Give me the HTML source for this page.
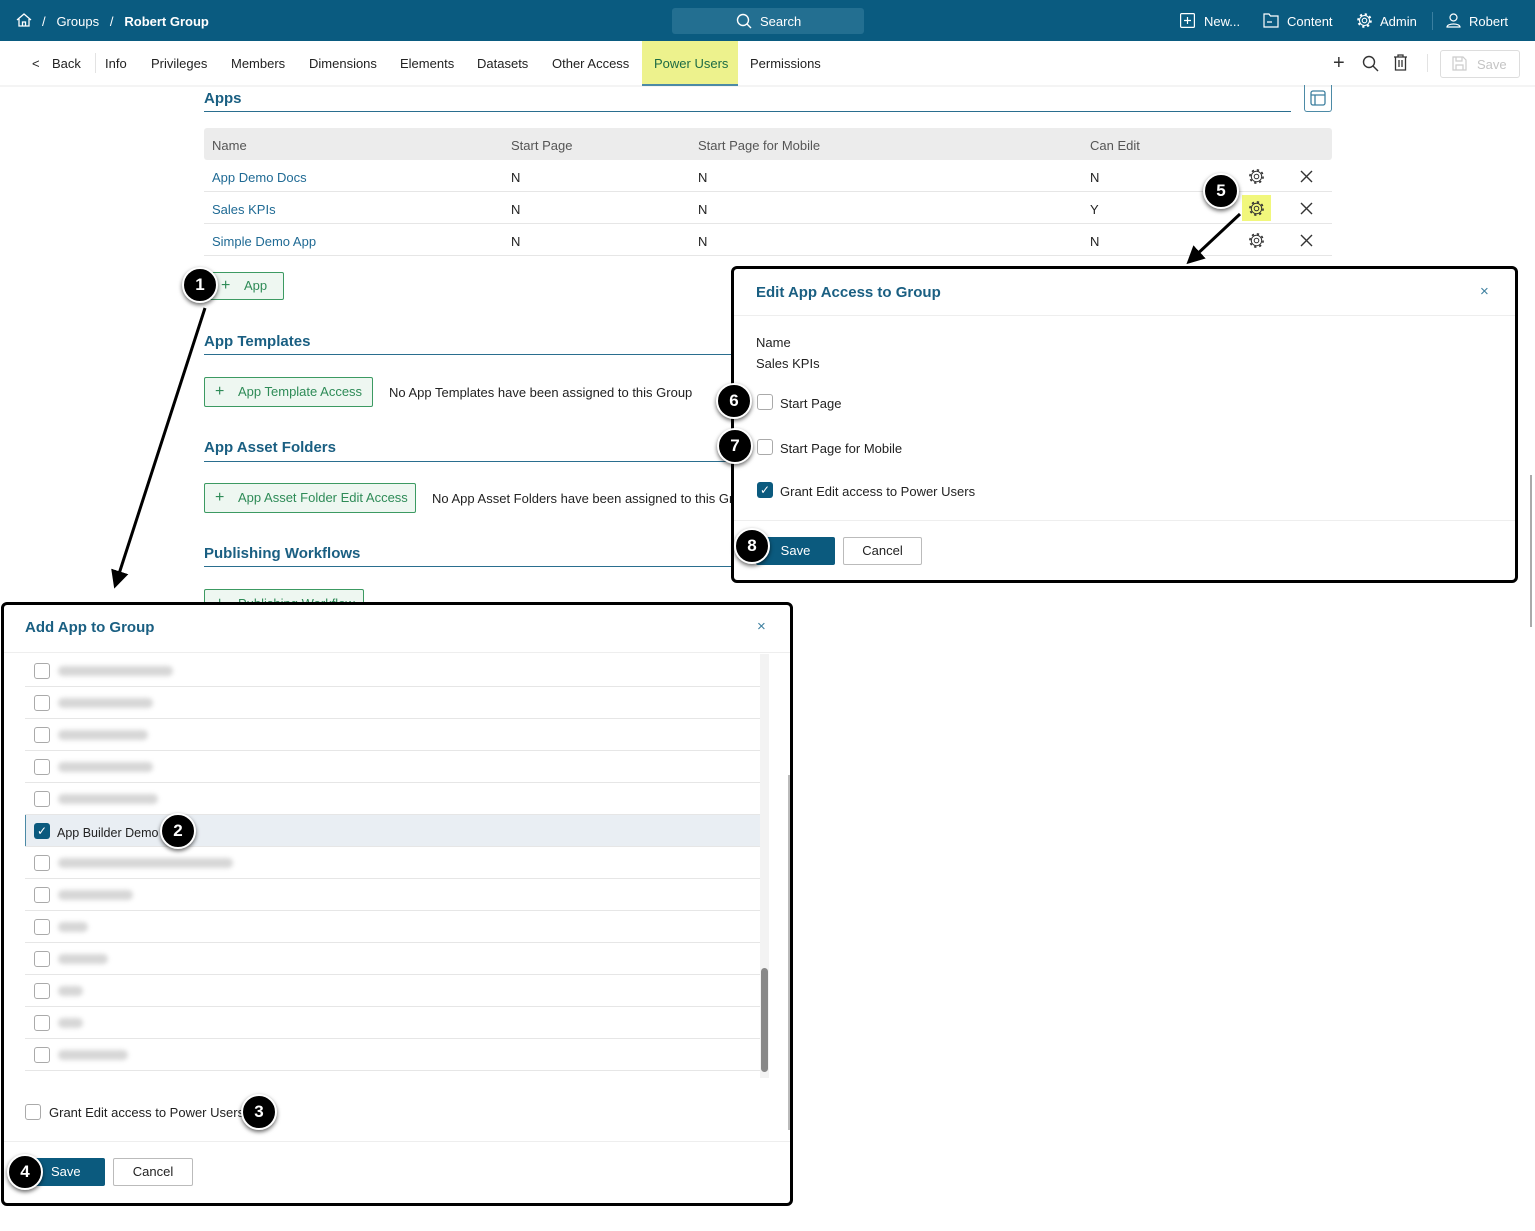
<!DOCTYPE html>
<html><head><meta charset="utf-8"><style>
*{box-sizing:border-box;margin:0;padding:0}
body{width:1535px;height:1231px;position:relative;background:#fff;font-family:"Liberation Sans",sans-serif;font-size:13px;color:#222;overflow:hidden}
.a{position:absolute;white-space:nowrap}
.top{left:0;top:0;width:1535px;height:41px;background:#0a5b80;color:#fff}
.tab{top:56px;font-size:13px;color:#222}
.h{font-size:15px;font-weight:bold;color:#1a5f82}
.ln{height:1px;background:#2a6e8f}
.sep{height:1px;background:#e6e6e6}
.lnk{color:#1f6a94}
.gbtn{border:1px solid #3c9a62;background:#eef7f1;color:#2e8b57;border-radius:2px;height:30px;line-height:28px;padding-left:10px;font-size:13px}
.gbtn span{display:inline-block;width:23px;font-size:16px}
.modal{border:3px solid #000;border-radius:6px;background:#fff}
.mt{font-size:15px;font-weight:bold;color:#1a5f82}
.cb{width:16px;height:16px;border:1px solid #aaa;border-radius:3px;background:#fff}
.cbk{width:16px;height:16px;border-radius:3px;background:#0b5a7e;color:#fff;font-size:12px;line-height:16px;text-align:center}
.save{background:#0b5a7e;color:#fff;border-radius:2px;text-align:center;line-height:28px;height:28px}
.cancel{border:1px solid #bbb;color:#222;border-radius:2px;text-align:center;line-height:26px;height:28px;background:#fff}
.mk{width:36px;height:36px;border-radius:50%;background:#000;border:2px solid #fff;box-shadow:0 2px 4px rgba(0,0,0,.6);color:#fff;font-size:17px;font-weight:bold;text-align:center;line-height:32px}
.blur{background:#d6d6d6;filter:blur(2.5px);height:10px;border-radius:5px}
</style></head><body>
<div class="a top"></div>
<svg class="a" style="left:16px;top:12px" width="16" height="16" viewBox="0 0 16 16" fill="none" stroke="#fff" stroke-width="1.3"><path d="M1 8 8 2l7 6M3 7v7h10V7M6.5 14v-4h3v4"/></svg>
<div class="a" style="left:42px;top:14px;color:#fff">/&nbsp;&nbsp;&nbsp;Groups&nbsp;&nbsp;&nbsp;/&nbsp;&nbsp;&nbsp;<b>Robert Group</b></div>
<div class="a" style="left:672px;top:8px;width:192px;height:26px;background:#236f91;border-radius:3px"></div>
<svg class="a" style="left:736px;top:13px" width="16" height="16" fill="none" stroke="#fff" stroke-width="1.4"><circle cx="7" cy="7" r="5.5"/><path d="M11 11l4 4"/></svg>
<div class="a" style="left:760px;top:14px;color:#fff">Search</div>
<svg class="a" style="left:1180px;top:13px" width="15" height="15" fill="none" stroke="#fff" stroke-width="1.2"><rect x=".6" y=".6" width="13.8" height="13.8" rx="1"/><path d="M7.5 4v7M4 7.5h7"/></svg>
<div class="a" style="left:1204px;top:14px;color:#fff">New...</div>
<svg class="a" style="left:1263px;top:13px" width="16" height="15" fill="none" stroke="#fff" stroke-width="1.2"><path d="M1 1h5l1.5 2H15v11H1zM4 9h5"/></svg>
<div class="a" style="left:1287px;top:14px;color:#fff">Content</div>
<svg class="a" style="left:1356px;top:12px" width="17" height="17" fill="none" stroke="#fff"><circle cx="8.5" cy="8.5" r="2.3" stroke-width="1.1"/><circle cx="8.5" cy="8.5" r="6.3" stroke-dasharray="2.2 2.75" stroke-width="2"/><circle cx="8.5" cy="8.5" r="5" stroke-width="1"/></svg>
<div class="a" style="left:1380px;top:14px;color:#fff">Admin</div>
<div class="a" style="left:1432px;top:12px;width:1px;height:18px;background:#3a7fa0"></div>
<svg class="a" style="left:1446px;top:13px" width="15" height="15" fill="none" stroke="#fff" stroke-width="1.2"><circle cx="7.5" cy="4.5" r="3.5"/><path d="M1 14c0-4 13-4 13 0z"/></svg>
<div class="a" style="left:1469px;top:14px;color:#fff">Robert</div>

<div class="a" style="left:0;top:85px;width:1535px;height:2px;background:#f4f4f4"></div>
<div class="a tab" style="left:32px">&lt;</div>
<div class="a tab" style="left:52px">Back</div>
<div class="a" style="left:95px;top:53px;width:1px;height:20px;background:#e3e3e3"></div>
<div class="a tab" style="left:105px">Info</div>
<div class="a tab" style="left:151px">Privileges</div>
<div class="a tab" style="left:231px">Members</div>
<div class="a tab" style="left:309px">Dimensions</div>
<div class="a tab" style="left:400px">Elements</div>
<div class="a tab" style="left:477px">Datasets</div>
<div class="a tab" style="left:552px">Other Access</div>
<div class="a" style="left:642px;top:41px;width:96px;height:45px;background:#edf28d;border-bottom:2px solid #4c8aa6"></div>
<div class="a tab" style="left:654px;color:#1d6b44">Power Users</div>
<div class="a tab" style="left:750px">Permissions</div>
<div class="a" style="left:1333px;top:52px;font-size:20px;color:#333">+</div>
<svg class="a" style="left:1362px;top:55px" width="17" height="17" fill="none" stroke="#333" stroke-width="1.4"><circle cx="7" cy="7" r="5.5"/><path d="M11 11l5 5"/></svg>
<svg class="a" style="left:1393px;top:54px" width="15" height="17" fill="none" stroke="#333" stroke-width="1.3"><path d="M1 3h13M5 3V1h5v2M2.5 3v13h10V3M6 6v7M9 6v7"/></svg>
<div class="a" style="left:1427px;top:54px;width:1px;height:18px;background:#e3e3e3"></div>
<div class="a" style="left:1440px;top:50px;width:80px;height:28px;border:1px solid #ddd;border-radius:3px;color:#c4c4c4;padding:6px 0 0 36px">Save</div>
<svg class="a" style="left:1452px;top:56px" width="15" height="15" fill="none" stroke="#ccc" stroke-width="1.2"><path d="M1 1h10l3 3v10H1zM4 1v4h6V1M4 14V9h7v5"/></svg>

<div class="a h" style="left:204px;top:90px">Apps</div>
<div class="a ln" style="left:204px;top:111px;width:1087px"></div>
<div class="a" style="left:1304px;top:85px;width:28px;height:27px;border:1px solid #4c8aa6;border-radius:0 0 3px 3px;border-top:none"></div>
<svg class="a" style="left:1310px;top:90px" width="16" height="16" fill="none" stroke="#3d7f9f" stroke-width="1.3"><rect x="1" y="1" width="14" height="14" rx="2"/><path d="M1 5h14M5 5v10"/></svg>
<div class="a" style="left:204px;top:128px;width:1128px;height:32px;background:#ececec;border-radius:3px"></div>
<div class="a" style="left:212px;top:138px;color:#555">Name</div>
<div class="a" style="left:511px;top:138px;color:#555">Start Page</div>
<div class="a" style="left:698px;top:138px;color:#555">Start Page for Mobile</div>
<div class="a" style="left:1090px;top:138px;color:#555">Can Edit</div>
<div class="a lnk" style="left:212px;top:170px">App Demo Docs</div>
<div class="a lnk" style="left:212px;top:202px">Sales KPIs</div>
<div class="a lnk" style="left:212px;top:234px">Simple Demo App</div>
<div class="a" style="left:511px;top:170px">N</div><div class="a" style="left:698px;top:170px">N</div><div class="a" style="left:1090px;top:170px">N</div>
<div class="a" style="left:511px;top:202px">N</div><div class="a" style="left:698px;top:202px">N</div><div class="a" style="left:1090px;top:202px">Y</div>
<div class="a" style="left:511px;top:234px">N</div><div class="a" style="left:698px;top:234px">N</div><div class="a" style="left:1090px;top:234px">N</div>
<div class="a sep" style="left:204px;top:191px;width:1128px"></div>
<div class="a sep" style="left:204px;top:223px;width:1128px"></div>
<div class="a sep" style="left:204px;top:255px;width:1128px"></div>
<div class="a" style="left:1242px;top:195px;width:29px;height:26px;background:#f1f77c"></div>
<svg class="a" style="left:1248px;top:168px" width="17" height="81" fill="none" stroke="#333">
<g><circle cx="8.5" cy="8.5" r="2.3" stroke-width="1"/><circle cx="8.5" cy="8.5" r="6.6" stroke-dasharray="2.3 2.9" stroke-width="1.6"/><circle cx="8.5" cy="8.5" r="5.2" stroke-width="1"/></g>
<g transform="translate(0,32)"><circle cx="8.5" cy="8.5" r="2.3" stroke-width="1"/><circle cx="8.5" cy="8.5" r="6.6" stroke-dasharray="2.3 2.9" stroke-width="1.6"/><circle cx="8.5" cy="8.5" r="5.2" stroke-width="1"/></g>
<g transform="translate(0,64)"><circle cx="8.5" cy="8.5" r="2.3" stroke-width="1"/><circle cx="8.5" cy="8.5" r="6.6" stroke-dasharray="2.3 2.9" stroke-width="1.6"/><circle cx="8.5" cy="8.5" r="5.2" stroke-width="1"/></g>
</svg>
<svg class="a" style="left:1300px;top:170px" width="13" height="77" stroke="#333" stroke-width="1.4"><path d="M1 1l11 11M12 1 1 12M1 33l11 11M12 33 1 44M1 65l11 11M12 65 1 76"/></svg>

<div class="a gbtn" style="left:204px;top:272px;width:80px;height:28px;line-height:26px;padding-left:16px"><span>+</span>App</div>
<div class="a h" style="left:204px;top:333px">App Templates</div>
<div class="a ln" style="left:204px;top:354px;width:530px"></div>
<div class="a gbtn" style="left:204px;top:377px;width:169px"><span>+</span>App Template Access</div>
<div class="a" style="left:389px;top:385px">No App Templates have been assigned to this Group</div>
<div class="a h" style="left:204px;top:439px">App Asset Folders</div>
<div class="a ln" style="left:204px;top:461px;width:530px"></div>
<div class="a gbtn" style="left:204px;top:483px;width:212px"><span>+</span>App Asset Folder Edit Access</div>
<div class="a" style="left:432px;top:491px">No App Asset Folders have been assigned to this Gro</div>
<div class="a h" style="left:204px;top:545px">Publishing Workflows</div>
<div class="a ln" style="left:204px;top:566px;width:530px"></div>
<div class="a gbtn" style="left:204px;top:589px;width:160px;height:20px;overflow:hidden"><span>+</span>Publishing Workflow</div>
<div class="a" style="left:1530px;top:475px;width:2px;height:152px;background:#aaa"></div>

<!-- right modal -->
<div class="a modal" style="left:731px;top:266px;width:787px;height:317px"></div>
<div class="a mt" style="left:756px;top:284px">Edit App Access to Group</div>
<div class="a" style="left:1480px;top:283px;color:#3d7f9f;font-size:15px">×</div>
<div class="a sep" style="left:734px;top:315px;width:781px;background:#eee"></div>
<div class="a" style="left:756px;top:335px">Name</div>
<div class="a" style="left:756px;top:356px">Sales KPIs</div>
<div class="a cb" style="left:757px;top:394px"></div><div class="a" style="left:780px;top:396px">Start Page</div>
<div class="a cb" style="left:757px;top:439px"></div><div class="a" style="left:780px;top:441px">Start Page for Mobile</div>
<div class="a cbk" style="left:757px;top:482px">✓</div><div class="a" style="left:780px;top:484px">Grant Edit access to Power Users</div>
<div class="a sep" style="left:734px;top:520px;width:781px;background:#eee"></div>
<div class="a save" style="left:756px;top:537px;width:79px">Save</div>
<div class="a cancel" style="left:843px;top:537px;width:79px">Cancel</div>

<!-- left modal -->
<div class="a modal" style="left:1px;top:602px;width:792px;height:604px"></div>
<div class="a mt" style="left:25px;top:619px">Add App to Group</div>
<div class="a" style="left:757px;top:618px;color:#3d7f9f;font-size:15px">×</div>
<div class="a sep" style="left:4px;top:652px;width:786px;background:#eee"></div>
<div class="a" style="left:25px;top:815px;width:744px;height:32px;background:#e9eef3;border-left:1px solid #4c8aa6"></div>
<div class="a" style="left:760px;top:654px;width:9px;height:424px;background:#f3f3f3"></div>
<div class="a" style="left:761px;top:968px;width:7px;height:104px;background:#888;border-radius:4px"></div>
<div class="a" style="left:788px;top:775px;width:2px;height:355px;background:#bbb"></div>
<div class="a cb" style="left:25px;top:1104px"></div>
<div class="a" style="left:49px;top:1105px">Grant Edit access to Power Users</div>
<div class="a sep" style="left:4px;top:1141px;width:786px;background:#eee"></div>
<div class="a save" style="left:25px;top:1158px;width:80px;text-align:left;padding-left:26px">Save</div>
<div class="a cancel" style="left:113px;top:1158px;width:80px">Cancel</div>

<!-- list rows -->
<div class="a cb" style="left:34px;top:663px"></div><div class="a blur" style="left:58px;top:666px;width:115px"></div>
<div class="a cb" style="left:34px;top:695px"></div><div class="a blur" style="left:58px;top:698px;width:95px"></div>
<div class="a cb" style="left:34px;top:727px"></div><div class="a blur" style="left:58px;top:730px;width:90px"></div>
<div class="a cb" style="left:34px;top:759px"></div><div class="a blur" style="left:58px;top:762px;width:95px"></div>
<div class="a cb" style="left:34px;top:791px"></div><div class="a blur" style="left:58px;top:794px;width:100px"></div>
<div class="a cbk" style="left:34px;top:823px">✓</div><div class="a" style="left:57px;top:826px;font-size:12.5px">App Builder Demo</div>
<div class="a cb" style="left:34px;top:855px"></div><div class="a blur" style="left:58px;top:858px;width:175px"></div>
<div class="a cb" style="left:34px;top:887px"></div><div class="a blur" style="left:58px;top:890px;width:75px"></div>
<div class="a cb" style="left:34px;top:919px"></div><div class="a blur" style="left:58px;top:922px;width:30px"></div>
<div class="a cb" style="left:34px;top:951px"></div><div class="a blur" style="left:58px;top:954px;width:50px"></div>
<div class="a cb" style="left:34px;top:983px"></div><div class="a blur" style="left:58px;top:986px;width:25px"></div>
<div class="a cb" style="left:34px;top:1015px"></div><div class="a blur" style="left:58px;top:1018px;width:25px"></div>
<div class="a cb" style="left:34px;top:1047px"></div><div class="a blur" style="left:58px;top:1050px;width:70px"></div>
<div class="a sep" style="left:25px;top:686px;width:735px"></div>
<div class="a sep" style="left:25px;top:718px;width:735px"></div>
<div class="a sep" style="left:25px;top:750px;width:735px"></div>
<div class="a sep" style="left:25px;top:782px;width:735px"></div>
<div class="a sep" style="left:25px;top:814px;width:735px"></div>
<div class="a sep" style="left:25px;top:846px;width:735px"></div>
<div class="a sep" style="left:25px;top:878px;width:735px"></div>
<div class="a sep" style="left:25px;top:910px;width:735px"></div>
<div class="a sep" style="left:25px;top:942px;width:735px"></div>
<div class="a sep" style="left:25px;top:974px;width:735px"></div>
<div class="a sep" style="left:25px;top:1006px;width:735px"></div>
<div class="a sep" style="left:25px;top:1038px;width:735px"></div>
<div class="a sep" style="left:25px;top:1070px;width:735px"></div>

<!-- arrows -->
<svg class="a" style="left:0;top:0" width="1535" height="1231"><defs><marker id="ah" markerWidth="6" markerHeight="6" refX="3" refY="3" orient="auto"><path d="M0 0L6 3 0 6z" fill="#000"/></marker></defs>
<path d="M205 308 L117 580" stroke="#000" stroke-width="3" marker-end="url(#ah)"/>
<path d="M1240 214 L1193 258" stroke="#000" stroke-width="3" marker-end="url(#ah)"/>
</svg>
<div class="a mk" style="left:182px;top:267px">1</div>
<div class="a mk" style="left:160px;top:813px">2</div>
<div class="a mk" style="left:241px;top:1094px">3</div>
<div class="a mk" style="left:7px;top:1154px">4</div>
<div class="a mk" style="left:1203px;top:173px">5</div>
<div class="a mk" style="left:716px;top:383px">6</div>
<div class="a mk" style="left:717px;top:428px">7</div>
<div class="a mk" style="left:734px;top:528px">8</div>
</body></html>
